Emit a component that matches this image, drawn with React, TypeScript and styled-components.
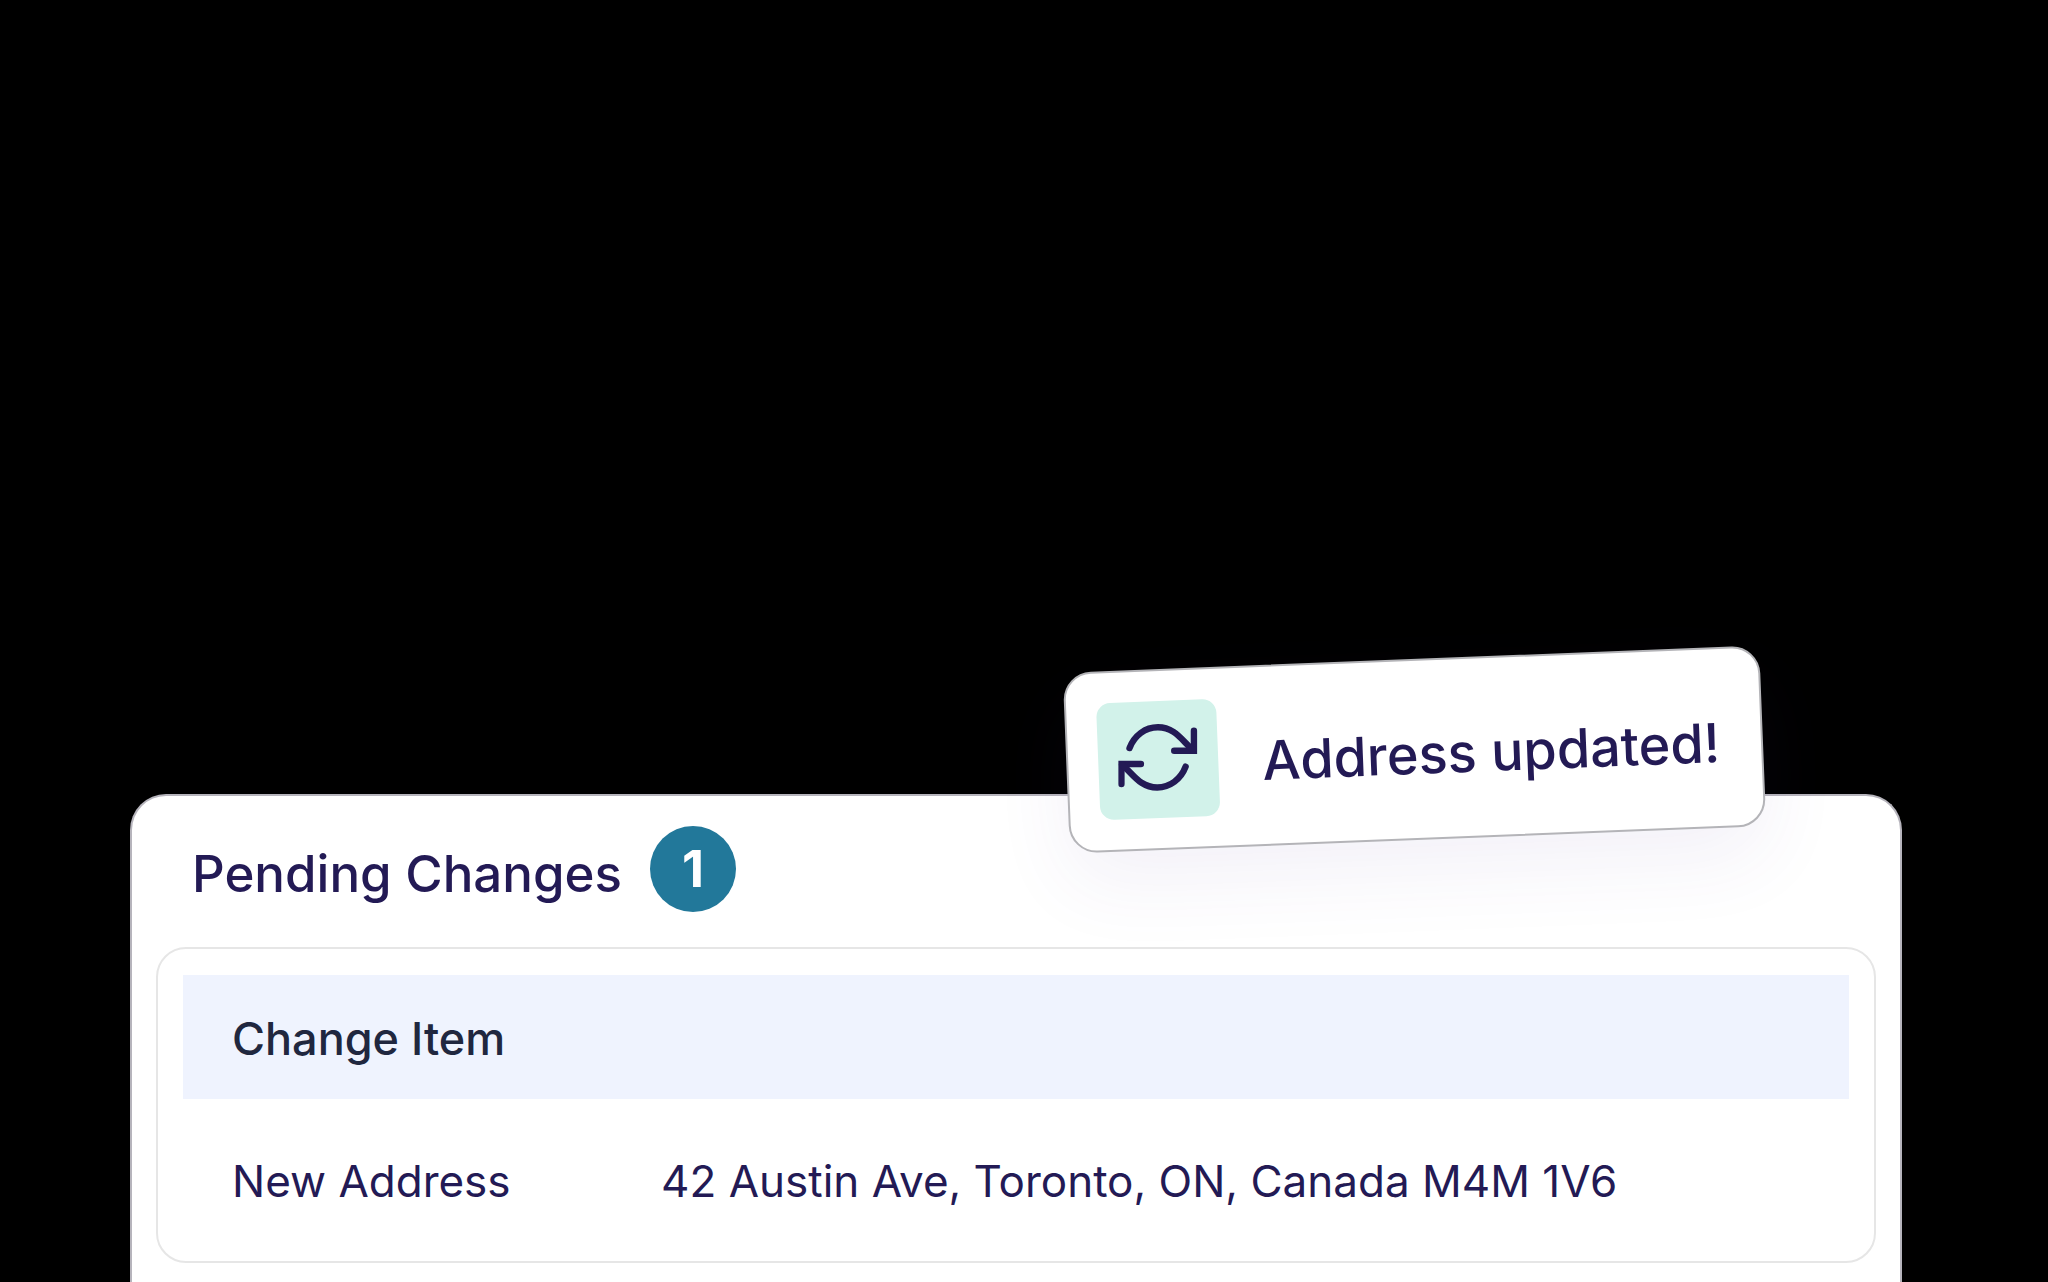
import styled, { createGlobalStyle } from "styled-components";

const INK = "#231a55";
const TILT = "2.25deg";

const GlobalStyle = createGlobalStyle`
  *, *::before, *::after {
    box-sizing: border-box;
  }
  body {
    margin: 0;
    background: #000;
    color: ${INK};
    font-family: Inter, "Liberation Sans", sans-serif;
  }
`;

const Stage = styled.main`
  display: flex;
  flex-direction: column;
  justify-content: flex-end;
  min-height: 100vh;
  padding: 160px 146px 0 130px;
`;

const Card = styled.section`
  position: relative;
  padding: 0 24px 19px;
  background: #fff;
  border: 2px solid #b6b4bc;
  border-bottom: 0;
  border-radius: 36px 36px 0 0;
`;

const CardHeader = styled.header`
  display: flex;
  align-items: flex-end;
  gap: 28px;
  padding: 30px 36px 35px;
`;

const Title = styled.h1`
  margin: 0;
  font-size: 51px;
  font-weight: 500;
  line-height: 76px;
`;

const Count = styled.span`
  display: grid;
  place-items: center;
  width: 86px;
  height: 86px;
  padding-bottom: 2px;
  border-radius: 50%;
  background: #22789a;
  color: #fff;
  font-size: 51px;
  font-weight: 700;
  line-height: 1;
`;

const Panel = styled.div`
  position: relative;
  padding: 26px 25px 0;
  background: #fff;
  border: 2px solid #e6e6e6;
  border-radius: 30px;
`;

const Table = styled.table`
  width: 100%;
  border-collapse: collapse;
  table-layout: fixed;
  text-align: left;
`;

const LabelColumn = styled.col`
  width: 478px;
`;

const HeadCell = styled.th`
  height: 124px;
  padding: 2px 49px 0;
  background: #eff3fe;
  color: #20273f;
  font-size: 45px;
  font-weight: 500;
`;

const RowLabel = styled.th`
  height: 162px;
  padding: 2px 0 0 49px;
  font-size: 44px;
  font-weight: 400;
`;

const RowValue = styled.td`
  padding: 2px 0 0;
  font-size: 44px;
`;

const Toast = styled.div`
  position: absolute;
  top: -137px;
  right: 137px;
  z-index: 1;
  display: flex;
  align-items: center;
  gap: 44px;
  height: 181px;
  padding: 0 41px 0 30px;
  background: #fff;
  border: 2px solid #b4b4b8;
  border-radius: 28px;
  box-shadow: 0 30px 80px rgba(80, 60, 160, 0.07);
  transform: rotate(-${TILT});
`;

const ToastIcon = styled.span`
  display: grid;
  place-items: center;
  width: 120px;
  height: 117px;
  border-radius: 14px;
  background: #d2f2ea;

  svg {
    transform: rotate(${TILT});
  }
`;

const ToastText = styled.p`
  margin: 0;
  padding-top: 10px;
  font-size: 54px;
  font-weight: 500;
  line-height: 66px;
  white-space: nowrap;
`;

function RefreshIcon() {
  return (
    <svg
      width="80"
      height="72"
      viewBox="0 0 80 72"
      fill="none"
      stroke={INK}
      strokeWidth="6.4"
      strokeLinecap="round"
      strokeLinejoin="miter"
      aria-hidden="true"
    >
      <path d="M75.7 6.7V26.7H56" />
      <path d="M11.3 24C16 11.5 27 3.2 39.7 3.2C57 3.2 64 17 75 26" />
      <path d="M3.2 60V39.9H22.7" />
      <path d="M67.4 42.6C62.7 55.1 51.7 63.4 39 63.4C21.7 63.4 14.7 49.6 3.9 40.6" />
    </svg>
  );
}

const changes = [
  { item: "New Address", value: "42 Austin Ave, Toronto, ON, Canada M4M 1V6" },
];

export default function App() {
  return (
    <>
      <GlobalStyle />
      <Stage>
        <Card>
          <Toast role="status">
            <ToastIcon>
              <RefreshIcon />
            </ToastIcon>
            <ToastText>Address updated!</ToastText>
          </Toast>
          <CardHeader>
            <Title>Pending Changes</Title>
            <Count>{changes.length}</Count>
          </CardHeader>
          <Panel>
            <Table>
              <colgroup>
                <LabelColumn />
                <col />
              </colgroup>
              <thead>
                <tr>
                  <HeadCell colSpan={2} scope="col">
                    Change Item
                  </HeadCell>
                </tr>
              </thead>
              <tbody>
                {changes.map((change) => (
                  <tr key={change.item}>
                    <RowLabel scope="row">{change.item}</RowLabel>
                    <RowValue>{change.value}</RowValue>
                  </tr>
                ))}
              </tbody>
            </Table>
          </Panel>
        </Card>
      </Stage>
    </>
  );
}
